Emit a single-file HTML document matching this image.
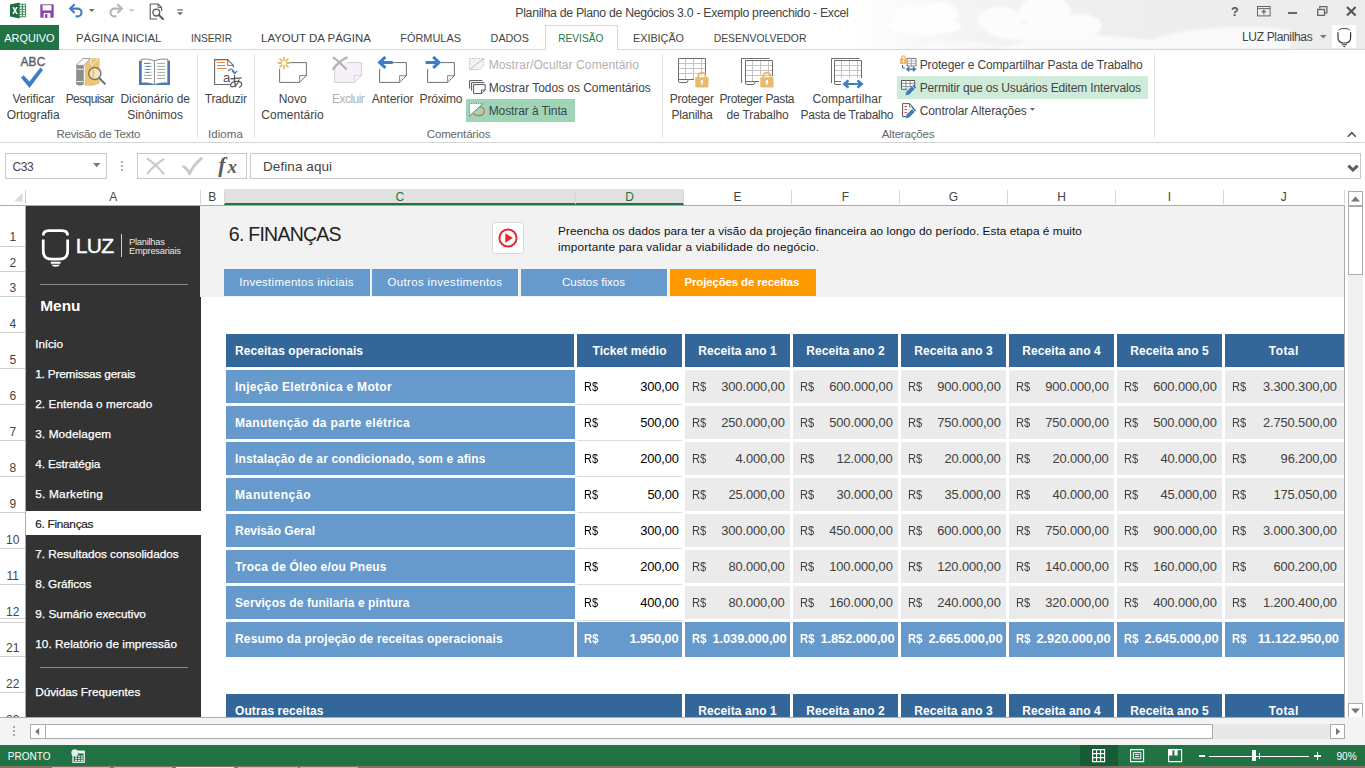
<!DOCTYPE html>
<html><head><meta charset="utf-8"><title>Excel</title>
<style>
*{box-sizing:border-box;margin:0;padding:0}
html,body{width:1365px;height:768px;overflow:hidden;background:#fff}
body{font-family:"Liberation Sans",sans-serif;color:#444}
#root{position:absolute;left:0;top:0;width:1365px;height:768px;overflow:hidden;background:#fff}
.t{position:absolute;white-space:pre;line-height:1;display:block}
.r{position:absolute;display:block}
</style></head><body><div id="root">
<svg class="r" style="left:850.00px;top:0.00px" width="515" height="49" viewBox="0 0 515 49"><defs><linearGradient id="cg" x1="0" x2="1" y1="0" y2="0"><stop offset="0" stop-color="#f1f1f1" stop-opacity="0"/><stop offset="0.22" stop-color="#f1f1f1" stop-opacity="0.8"/><stop offset="0.5" stop-color="#eeeeee" stop-opacity="1"/><stop offset="1" stop-color="#ececec" stop-opacity="1"/></linearGradient>
<filter id="bl"><feGaussianBlur stdDeviation="0.8"/></filter></defs>
<rect width="515" height="49" fill="url(#cg)"/>
<g fill="#fff" opacity="0.8" filter="url(#bl)">
<ellipse cx="60" cy="16" rx="16" ry="11"/><ellipse cx="88" cy="14" rx="20" ry="12"/><ellipse cx="75" cy="26" rx="36" ry="9"/>
<ellipse cx="150" cy="20" rx="22" ry="13"/><ellipse cx="195" cy="12" rx="26" ry="16"/><ellipse cx="230" cy="26" rx="22" ry="12"/><ellipse cx="185" cy="32" rx="48" ry="8"/>
<path d="M150 49 C200 30 250 34 300 40 C340 26 400 24 440 30 L440 49Z" opacity="0.85"/>
<path d="M60 49 C90 38 130 40 160 49Z" opacity="0.6"/>
</g></svg>
<span class="t" style="left:515.30px;top:7.00px;font-size:12.30px;letter-spacing:-0.304px;color:#444;">Planilha de Plano de Negócios 3.0 - Exemplo preenchido - Excel</span>
<div class="r" style="left:0.00px;top:49.00px;width:1365.00px;height:1.00px;background:#d6d6d6;"></div>
<div class="r" style="left:0.00px;top:25.00px;width:59.00px;height:25.00px;background:#217346;"></div>
<span class="t" style="left:4.30px;top:33.00px;font-size:10.90px;letter-spacing:-0.007px;color:#fff;">ARQUIVO</span>
<span class="t" style="left:76.00px;top:33.00px;font-size:11.40px;letter-spacing:-0.005px;color:#444;">PÁGINA INICIAL</span>
<span class="t" style="left:191.00px;top:34.00px;font-size:10.10px;letter-spacing:-0.004px;color:#444;">INSERIR</span>
<span class="t" style="left:261.00px;top:33.00px;font-size:11.50px;letter-spacing:-0.017px;color:#444;">LAYOUT DA PÁGINA</span>
<span class="t" style="left:400.20px;top:33.00px;font-size:10.90px;letter-spacing:0.041px;color:#444;">FÓRMULAS</span>
<span class="t" style="left:490.60px;top:33.00px;font-size:10.80px;letter-spacing:-0.007px;color:#444;">DADOS</span>
<span class="t" style="left:633.00px;top:33.00px;font-size:10.80px;letter-spacing:0.002px;color:#444;">EXIBIÇÃO</span>
<span class="t" style="left:713.70px;top:34.00px;font-size:10.40px;letter-spacing:-0.004px;color:#444;">DESENVOLVEDOR</span>
<div class="r" style="left:545.00px;top:25.00px;width:73.00px;height:25.00px;background:#fff;border:1px solid #d6d6d6;border-bottom:none;"></div>
<span class="t" style="left:558.30px;top:34.00px;font-size:10.10px;letter-spacing:0.019px;color:#217346;">REVISÃO</span>
<span class="t" style="left:1242.00px;top:31.00px;font-size:12.00px;letter-spacing:-0.337px;color:#444;">LUZ Planilhas</span>
<div class="r" style="left:0.00px;top:142.00px;width:1365.00px;height:1.00px;background:#d6d6d6;"></div>
<div class="r" style="left:197.00px;top:54.00px;width:1.00px;height:84.00px;background:#e1e1e1;"></div>
<div class="r" style="left:254.00px;top:54.00px;width:1.00px;height:84.00px;background:#e1e1e1;"></div>
<div class="r" style="left:662.00px;top:54.00px;width:1.00px;height:84.00px;background:#e1e1e1;"></div>
<div class="r" style="left:1154.00px;top:54.00px;width:1.00px;height:84.00px;background:#e1e1e1;"></div>
<span class="t" style="left:12.40px;top:93.00px;font-size:12.00px;letter-spacing:-0.134px;color:#444;">Verificar</span>
<span class="t" style="left:6.70px;top:109.00px;font-size:12.00px;letter-spacing:-0.053px;color:#444;">Ortografia</span>
<span class="t" style="left:65.70px;top:93.00px;font-size:12.00px;letter-spacing:-0.597px;color:#444;">Pesquisar</span>
<span class="t" style="left:120.40px;top:93.00px;font-size:12.00px;letter-spacing:-0.033px;color:#444;">Dicionário de</span>
<span class="t" style="left:127.20px;top:109.00px;font-size:12.00px;letter-spacing:-0.037px;color:#444;">Sinônimos</span>
<span class="t" style="left:204.80px;top:93.00px;font-size:12.00px;letter-spacing:-0.204px;color:#444;">Traduzir</span>
<span class="t" style="left:278.70px;top:93.00px;font-size:12.00px;letter-spacing:0.000px;color:#444;">Novo</span>
<span class="t" style="left:261.30px;top:109.00px;font-size:12.00px;letter-spacing:0.044px;color:#444;">Comentário</span>
<span class="t" style="left:332.00px;top:93.00px;font-size:12.00px;letter-spacing:-0.533px;color:#b1b1b1;">Excluir</span>
<span class="t" style="left:371.70px;top:93.00px;font-size:12.00px;letter-spacing:-0.014px;color:#444;">Anterior</span>
<span class="t" style="left:419.60px;top:93.00px;font-size:12.00px;letter-spacing:-0.200px;color:#444;">Próximo</span>
<span class="t" style="left:488.70px;top:59.00px;font-size:12.00px;letter-spacing:0.088px;color:#b1b1b1;">Mostrar/Ocultar Comentário</span>
<span class="t" style="left:488.70px;top:82.00px;font-size:12.00px;letter-spacing:-0.038px;color:#444;">Mostrar Todos os Comentários</span>
<div class="r" style="left:466.00px;top:99.00px;width:109.00px;height:23.00px;background:#9fd5b7;"></div>
<span class="t" style="left:488.70px;top:105.00px;font-size:12.00px;letter-spacing:-0.102px;color:#444;">Mostrar à Tinta</span>
<span class="t" style="left:669.70px;top:93.00px;font-size:12.00px;letter-spacing:-0.243px;color:#444;">Proteger</span>
<span class="t" style="left:671.50px;top:109.00px;font-size:12.00px;letter-spacing:-0.221px;color:#444;">Planilha</span>
<span class="t" style="left:719.50px;top:93.00px;font-size:12.00px;letter-spacing:-0.387px;color:#444;">Proteger Pasta</span>
<span class="t" style="left:726.40px;top:109.00px;font-size:12.00px;letter-spacing:-0.107px;color:#444;">de Trabalho</span>
<span class="t" style="left:812.50px;top:93.00px;font-size:12.00px;letter-spacing:0.068px;color:#444;">Compartilhar</span>
<span class="t" style="left:800.60px;top:109.00px;font-size:12.00px;letter-spacing:-0.280px;color:#444;">Pasta de Trabalho</span>
<span class="t" style="left:919.70px;top:59.00px;font-size:12.00px;letter-spacing:-0.144px;color:#444;">Proteger e Compartilhar Pasta de Trabalho</span>
<div class="r" style="left:897.00px;top:76.00px;width:251.00px;height:23.00px;background:#cfecdb;"></div>
<span class="t" style="left:919.70px;top:82.00px;font-size:12.00px;letter-spacing:-0.148px;color:#444;">Permitir que os Usuários Editem Intervalos</span>
<span class="t" style="left:919.70px;top:105.00px;font-size:12.00px;letter-spacing:-0.087px;color:#444;">Controlar Alterações</span>
<span class="t" style="left:56.60px;top:129.00px;font-size:11.50px;letter-spacing:-0.280px;color:#666;">Revisão de Texto</span>
<span class="t" style="left:208.00px;top:129.00px;font-size:11.50px;letter-spacing:0.075px;color:#666;">Idioma</span>
<span class="t" style="left:426.80px;top:129.00px;font-size:11.50px;letter-spacing:-0.155px;color:#666;">Comentários</span>
<span class="t" style="left:881.80px;top:129.00px;font-size:11.50px;letter-spacing:-0.186px;color:#666;">Alterações</span>
<div class="r" style="left:5.00px;top:153.00px;width:102.00px;height:26.00px;background:#fff;border:1px solid #c8c8c8;"></div>
<span class="t" style="left:12.50px;top:161.00px;font-size:12.00px;letter-spacing:-0.400px;color:#444;">C33</span>
<div class="r" style="left:137.00px;top:153.00px;width:110.00px;height:26.00px;background:#fff;border:1px solid #c8c8c8;"></div>
<div class="r" style="left:250.00px;top:153.00px;width:1111.00px;height:26.00px;background:#fff;border:1px solid #c8c8c8;"></div>
<span class="t" style="left:263.00px;top:160.00px;font-size:13.50px;letter-spacing:0.075px;color:#444;">Defina aqui</span>
<div class="r" style="left:0.00px;top:188.00px;width:1345.00px;height:17.00px;background:#fff;"></div>
<div class="r" style="left:224.00px;top:189.00px;width:459.50px;height:15.00px;background:#e1e1e1;"></div>
<div class="r" style="left:224.00px;top:203.00px;width:459.50px;height:2.00px;background:#217346;"></div>
<div class="r" style="left:200.00px;top:190.00px;width:1.00px;height:14.00px;background:#d6d6d6;"></div>
<span class="t" style="left:109.25px;top:191.00px;font-size:12.00px;letter-spacing:0.000px;color:#444;">A</span>
<div class="r" style="left:223.50px;top:190.00px;width:1.00px;height:14.00px;background:#d6d6d6;"></div>
<span class="t" style="left:208.25px;top:191.00px;font-size:12.00px;letter-spacing:0.000px;color:#444;">B</span>
<div class="r" style="left:575.00px;top:190.00px;width:1.00px;height:14.00px;background:#d6d6d6;"></div>
<span class="t" style="left:395.44px;top:191.00px;font-size:12.00px;letter-spacing:0.000px;color:#217346;">C</span>
<div class="r" style="left:683.00px;top:190.00px;width:1.00px;height:14.00px;background:#d6d6d6;"></div>
<span class="t" style="left:625.19px;top:191.00px;font-size:12.00px;letter-spacing:0.000px;color:#217346;">D</span>
<div class="r" style="left:791.00px;top:190.00px;width:1.00px;height:14.00px;background:#d6d6d6;"></div>
<span class="t" style="left:733.50px;top:191.00px;font-size:12.00px;letter-spacing:0.000px;color:#444;">E</span>
<div class="r" style="left:899.00px;top:190.00px;width:1.00px;height:14.00px;background:#d6d6d6;"></div>
<span class="t" style="left:841.81px;top:191.00px;font-size:12.00px;letter-spacing:0.000px;color:#444;">F</span>
<div class="r" style="left:1007.00px;top:190.00px;width:1.00px;height:14.00px;background:#d6d6d6;"></div>
<span class="t" style="left:948.81px;top:191.00px;font-size:12.00px;letter-spacing:0.000px;color:#444;">G</span>
<div class="r" style="left:1115.00px;top:190.00px;width:1.00px;height:14.00px;background:#d6d6d6;"></div>
<span class="t" style="left:1057.19px;top:191.00px;font-size:12.00px;letter-spacing:0.000px;color:#444;">H</span>
<div class="r" style="left:1223.00px;top:190.00px;width:1.00px;height:14.00px;background:#d6d6d6;"></div>
<span class="t" style="left:1167.81px;top:191.00px;font-size:12.00px;letter-spacing:0.000px;color:#444;">I</span>
<div class="r" style="left:1343.50px;top:190.00px;width:1.00px;height:14.00px;background:#d6d6d6;"></div>
<span class="t" style="left:1280.75px;top:191.00px;font-size:12.00px;letter-spacing:0.000px;color:#444;">J</span>
<div class="r" style="left:25.00px;top:190.00px;width:1.00px;height:14.00px;background:#d0d0d0;"></div>
<div class="r" style="left:0.00px;top:204.50px;width:1345.00px;height:1.00px;background:#ababab;"></div>
<svg class="r" style="left:13.50px;top:193.00px" width="9" height="9" viewBox="0 0 9 9"><path d="M8.6 0 V8.6 H0 Z" fill="#dcdcdc"/></svg>
<div class="r" style="left:0.00px;top:246.00px;width:25.00px;height:1.00px;background:#d0d0d0;"></div>
<span class="t" style="left:9.49px;top:231.00px;font-size:12.00px;letter-spacing:0.000px;color:#444;">1</span>
<div class="r" style="left:0.00px;top:271.00px;width:25.00px;height:1.00px;background:#d0d0d0;"></div>
<span class="t" style="left:9.49px;top:257.00px;font-size:12.00px;letter-spacing:0.000px;color:#444;">2</span>
<div class="r" style="left:0.00px;top:296.00px;width:25.00px;height:1.00px;background:#d0d0d0;"></div>
<span class="t" style="left:9.49px;top:282.00px;font-size:12.00px;letter-spacing:0.000px;color:#444;">3</span>
<div class="r" style="left:0.00px;top:332.00px;width:25.00px;height:1.00px;background:#d0d0d0;"></div>
<span class="t" style="left:9.49px;top:318.00px;font-size:12.00px;letter-spacing:0.000px;color:#444;">4</span>
<div class="r" style="left:0.00px;top:368.00px;width:25.00px;height:1.00px;background:#d0d0d0;"></div>
<span class="t" style="left:9.49px;top:354.00px;font-size:12.00px;letter-spacing:0.000px;color:#444;">5</span>
<div class="r" style="left:0.00px;top:404.00px;width:25.00px;height:1.00px;background:#d0d0d0;"></div>
<span class="t" style="left:9.49px;top:390.00px;font-size:12.00px;letter-spacing:0.000px;color:#444;">6</span>
<div class="r" style="left:0.00px;top:440.00px;width:25.00px;height:1.00px;background:#d0d0d0;"></div>
<span class="t" style="left:9.49px;top:426.00px;font-size:12.00px;letter-spacing:0.000px;color:#444;">7</span>
<div class="r" style="left:0.00px;top:476.00px;width:25.00px;height:1.00px;background:#d0d0d0;"></div>
<span class="t" style="left:9.49px;top:462.00px;font-size:12.00px;letter-spacing:0.000px;color:#444;">8</span>
<div class="r" style="left:0.00px;top:512.00px;width:25.00px;height:1.00px;background:#d0d0d0;"></div>
<span class="t" style="left:9.49px;top:498.00px;font-size:12.00px;letter-spacing:0.000px;color:#444;">9</span>
<div class="r" style="left:0.00px;top:548.00px;width:25.00px;height:1.00px;background:#d0d0d0;"></div>
<span class="t" style="left:6.11px;top:534.00px;font-size:12.00px;letter-spacing:0.000px;color:#444;">10</span>
<div class="r" style="left:0.00px;top:584.00px;width:25.00px;height:1.00px;background:#d0d0d0;"></div>
<span class="t" style="left:6.55px;top:570.00px;font-size:12.00px;letter-spacing:0.000px;color:#444;">11</span>
<span class="t" style="left:6.11px;top:606.00px;font-size:12.00px;letter-spacing:0.000px;color:#444;">12</span>
<div class="r" style="left:0.00px;top:656.00px;width:25.00px;height:1.00px;background:#d0d0d0;"></div>
<span class="t" style="left:6.11px;top:642.00px;font-size:12.00px;letter-spacing:0.000px;color:#444;">21</span>
<div class="r" style="left:0.00px;top:692.00px;width:25.00px;height:1.00px;background:#d0d0d0;"></div>
<span class="t" style="left:6.11px;top:678.00px;font-size:12.00px;letter-spacing:0.000px;color:#444;">22</span>
<div class="r" style="left:0.00px;top:728.00px;width:25.00px;height:1.00px;background:#d0d0d0;"></div>
<span class="t" style="left:6.11px;top:714.00px;font-size:12.00px;letter-spacing:0.000px;color:#444;">23</span>
<div class="r" style="left:0.00px;top:618.00px;width:25.00px;height:1.00px;background:#d0d0d0;"></div>
<div class="r" style="left:0.00px;top:622.00px;width:25.00px;height:1.00px;background:#d0d0d0;"></div>
<div class="r" style="left:25.00px;top:205.00px;width:1.00px;height:512.00px;background:#ababab;"></div>
<div class="r" style="left:26.00px;top:205.50px;width:174.50px;height:511.50px;background:#333333;"></div>
<div class="r" style="left:200.00px;top:205.50px;width:1144.00px;height:91.50px;background:#f2f2f2;"></div>
<div class="r" style="left:1344.00px;top:205.00px;width:1.00px;height:512.00px;background:#ababab;"></div>
<span class="t" style="left:75.80px;top:235.00px;font-size:21.00px;letter-spacing:-0.712px;color:#fff;-webkit-text-stroke:0.4px #fff;">LUZ</span>
<div class="r" style="left:121.00px;top:234.00px;width:1.00px;height:23.00px;background:#cfcfcf;"></div>
<span class="t" style="left:129.00px;top:238.00px;font-size:9.30px;letter-spacing:-0.238px;color:#e6e6e6;">Planilhas</span>
<span class="t" style="left:129.00px;top:247.00px;font-size:9.30px;letter-spacing:-0.208px;color:#e6e6e6;">Empresariais</span>
<svg class="r" style="left:40.00px;top:227.00px" width="32" height="42" viewBox="0 0 32 42"><g fill="none" stroke="#fff" stroke-width="2.7">
<path d="M3.25 8.6 Q3.25 3.55 9 3.55 H21.9 Q27.65 3.55 27.65 8.6"/>
<path d="M3.25 12.6 V24 Q3.25 32.2 12 32.2 H18.9 Q27.65 32.2 27.65 24 V12.6"/>
</g><path d="M10.8 34.7 H20.6 V36.7 H10.8Z M11.4 37.8 H20 Q19 39.8 15.7 39.8 Q12.4 39.8 11.4 37.8Z" fill="#fff"/></svg>
<div class="r" style="left:39.50px;top:284.00px;width:148.00px;height:1.00px;background:#8d8989;"></div>
<span class="t" style="left:40.30px;top:298.00px;font-size:15.40px;letter-spacing:0.003px;color:#fff;font-weight:bold;">Menu</span>
<span class="t" style="left:35.20px;top:339.00px;font-size:11.80px;letter-spacing:-0.089px;color:#fff;-webkit-text-stroke:0.25px #fff;">Início</span>
<span class="t" style="left:35.20px;top:369.00px;font-size:11.80px;letter-spacing:-0.181px;color:#fff;-webkit-text-stroke:0.25px #fff;">1. Premissas gerais</span>
<span class="t" style="left:35.20px;top:399.00px;font-size:11.80px;letter-spacing:0.052px;color:#fff;-webkit-text-stroke:0.25px #fff;">2. Entenda o mercado</span>
<span class="t" style="left:35.20px;top:429.00px;font-size:11.80px;letter-spacing:0.108px;color:#fff;-webkit-text-stroke:0.25px #fff;">3. Modelagem</span>
<span class="t" style="left:35.20px;top:459.00px;font-size:11.80px;letter-spacing:-0.090px;color:#fff;-webkit-text-stroke:0.25px #fff;">4. Estratégia</span>
<span class="t" style="left:35.20px;top:489.00px;font-size:11.80px;letter-spacing:0.245px;color:#fff;-webkit-text-stroke:0.25px #fff;">5. Marketing</span>
<span class="t" style="left:35.20px;top:549.00px;font-size:11.80px;letter-spacing:-0.034px;color:#fff;-webkit-text-stroke:0.25px #fff;">7. Resultados consolidados</span>
<span class="t" style="left:35.20px;top:579.00px;font-size:11.80px;letter-spacing:-0.079px;color:#fff;-webkit-text-stroke:0.25px #fff;">8. Gráficos</span>
<span class="t" style="left:35.20px;top:609.00px;font-size:11.80px;letter-spacing:0.031px;color:#fff;-webkit-text-stroke:0.25px #fff;">9. Sumário executivo</span>
<span class="t" style="left:35.20px;top:639.00px;font-size:11.80px;letter-spacing:0.033px;color:#fff;-webkit-text-stroke:0.25px #fff;">10. Relatório de impressão</span>
<span class="t" style="left:35.20px;top:687.00px;font-size:11.80px;letter-spacing:-0.028px;color:#fff;-webkit-text-stroke:0.25px #fff;">Dúvidas Frequentes</span>
<div class="r" style="left:26.00px;top:511.00px;width:174.50px;height:24.00px;background:#fff;"></div>
<span class="t" style="left:35.20px;top:519.00px;font-size:11.80px;letter-spacing:-0.271px;color:#222;-webkit-text-stroke:0.2px #222;">6. Finanças</span>
<div class="r" style="left:39.50px;top:667.00px;width:148.00px;height:1.00px;background:#8d8989;"></div>
<span class="t" style="left:228.80px;top:225.00px;font-size:19.50px;letter-spacing:-0.745px;color:#222;">6. FINANÇAS</span>
<span class="t" style="left:558.00px;top:226.00px;font-size:11.80px;letter-spacing:0.053px;color:#111;">Preencha os dados para ter a visão da projeção financeira ao longo do período. Esta etapa é muito</span>
<span class="t" style="left:558.00px;top:242.00px;font-size:11.80px;letter-spacing:0.149px;color:#111;">importante para validar a viabilidade do negócio.</span>
<div class="r" style="left:492.00px;top:222.00px;width:32.00px;height:31.50px;background:#fff;border:1px solid #d9d9d9;border-radius:3px;"></div>
<svg class="r" style="left:497.00px;top:227.00px" width="22" height="22" viewBox="0 0 22 22"><circle cx="11" cy="11" r="8.6" fill="none" stroke="#e8262b" stroke-width="2"/><path d="M8.3 6.2 L16 11 L8.3 15.8Z" fill="#e8262b"/></svg>
<div class="r" style="left:224.00px;top:269.00px;width:146.00px;height:27.00px;background:#6699cc;"></div>
<div class="r" style="left:372.00px;top:269.00px;width:146.00px;height:27.00px;background:#6699cc;"></div>
<div class="r" style="left:521.00px;top:269.00px;width:146.00px;height:27.00px;background:#6699cc;"></div>
<div class="r" style="left:670.00px;top:269.00px;width:146.00px;height:27.00px;background:#ff9900;"></div>
<span class="t" style="left:239.30px;top:277.00px;font-size:11.50px;letter-spacing:0.265px;color:#fff;">Investimentos iniciais</span>
<span class="t" style="left:387.50px;top:277.00px;font-size:11.50px;letter-spacing:0.342px;color:#fff;">Outros investimentos</span>
<span class="t" style="left:562.00px;top:277.00px;font-size:11.50px;letter-spacing:0.034px;color:#fff;">Custos fixos</span>
<span class="t" style="left:684.50px;top:277.00px;font-size:11.50px;letter-spacing:-0.163px;color:#fff;font-weight:bold;">Projeções de receitas</span>
<div class="r" style="left:226.00px;top:334.00px;width:348.00px;height:32.50px;background:#336699;"></div>
<div class="r" style="left:577.00px;top:334.00px;width:105.00px;height:32.50px;background:#336699;"></div>
<div class="r" style="left:685.00px;top:334.00px;width:105.00px;height:32.50px;background:#336699;"></div>
<div class="r" style="left:793.00px;top:334.00px;width:105.00px;height:32.50px;background:#336699;"></div>
<div class="r" style="left:901.00px;top:334.00px;width:105.00px;height:32.50px;background:#336699;"></div>
<div class="r" style="left:1009.00px;top:334.00px;width:105.00px;height:32.50px;background:#336699;"></div>
<div class="r" style="left:1117.00px;top:334.00px;width:105.00px;height:32.50px;background:#336699;"></div>
<div class="r" style="left:1225.30px;top:334.00px;width:118.70px;height:32.50px;background:#336699;"></div>
<span class="t" style="left:235.00px;top:345.00px;font-size:12.00px;letter-spacing:0.062px;color:#fff;font-weight:bold;">Receitas operacionais</span>
<span class="t" style="left:592.50px;top:345.00px;font-size:12.00px;letter-spacing:0.080px;color:#fff;font-weight:bold;">Ticket médio</span>
<span class="t" style="left:698.25px;top:345.00px;font-size:12.00px;letter-spacing:0.094px;color:#fff;font-weight:bold;">Receita ano 1</span>
<span class="t" style="left:806.25px;top:345.00px;font-size:12.00px;letter-spacing:0.094px;color:#fff;font-weight:bold;">Receita ano 2</span>
<span class="t" style="left:914.25px;top:345.00px;font-size:12.00px;letter-spacing:0.094px;color:#fff;font-weight:bold;">Receita ano 3</span>
<span class="t" style="left:1022.25px;top:345.00px;font-size:12.00px;letter-spacing:0.094px;color:#fff;font-weight:bold;">Receita ano 4</span>
<span class="t" style="left:1130.25px;top:345.00px;font-size:12.00px;letter-spacing:0.094px;color:#fff;font-weight:bold;">Receita ano 5</span>
<span class="t" style="left:1268.75px;top:345.00px;font-size:12.00px;letter-spacing:0.438px;color:#fff;font-weight:bold;">Total</span>
<div class="r" style="left:226.00px;top:370.00px;width:349.00px;height:32.70px;background:#6699cc;"></div>
<span class="t" style="left:235.00px;top:381.00px;font-size:12.00px;letter-spacing:0.289px;color:#fff;font-weight:bold;">Injeção Eletrônica e Motor</span>
<div class="r" style="left:577.00px;top:403.50px;width:105.00px;height:1.00px;background:#dcdcdc;"></div>
<span class="t" style="left:584.00px;top:381.00px;font-size:12.50px;letter-spacing:0.000px;color:#000;transform:scaleX(0.8750);transform-origin:0 0;">R$</span>
<span class="t" style="left:640.20px;top:381.00px;font-size:12.90px;letter-spacing:-0.150px;color:#000;">300,00</span>
<div class="r" style="left:685.00px;top:369.50px;width:105.00px;height:33.50px;background:#ebebeb;"></div>
<span class="t" style="left:691.70px;top:381.00px;font-size:12.50px;letter-spacing:0.000px;color:#404040;transform:scaleX(0.8937);transform-origin:0 0;">R$</span>
<span class="t" style="left:721.20px;top:381.00px;font-size:12.90px;letter-spacing:-0.100px;color:#404040;">300.000,00</span>
<div class="r" style="left:793.00px;top:369.50px;width:105.00px;height:33.50px;background:#ebebeb;"></div>
<span class="t" style="left:799.70px;top:381.00px;font-size:12.50px;letter-spacing:0.000px;color:#404040;transform:scaleX(0.8937);transform-origin:0 0;">R$</span>
<span class="t" style="left:829.20px;top:381.00px;font-size:12.90px;letter-spacing:-0.100px;color:#404040;">600.000,00</span>
<div class="r" style="left:901.00px;top:369.50px;width:105.00px;height:33.50px;background:#ebebeb;"></div>
<span class="t" style="left:907.70px;top:381.00px;font-size:12.50px;letter-spacing:0.000px;color:#404040;transform:scaleX(0.8937);transform-origin:0 0;">R$</span>
<span class="t" style="left:937.20px;top:381.00px;font-size:12.90px;letter-spacing:-0.100px;color:#404040;">900.000,00</span>
<div class="r" style="left:1009.00px;top:369.50px;width:105.00px;height:33.50px;background:#ebebeb;"></div>
<span class="t" style="left:1015.70px;top:381.00px;font-size:12.50px;letter-spacing:0.000px;color:#404040;transform:scaleX(0.8937);transform-origin:0 0;">R$</span>
<span class="t" style="left:1045.20px;top:381.00px;font-size:12.90px;letter-spacing:-0.100px;color:#404040;">900.000,00</span>
<div class="r" style="left:1117.00px;top:369.50px;width:105.00px;height:33.50px;background:#ebebeb;"></div>
<span class="t" style="left:1123.70px;top:381.00px;font-size:12.50px;letter-spacing:0.000px;color:#404040;transform:scaleX(0.8937);transform-origin:0 0;">R$</span>
<span class="t" style="left:1153.20px;top:381.00px;font-size:12.90px;letter-spacing:-0.100px;color:#404040;">600.000,00</span>
<div class="r" style="left:1225.30px;top:369.50px;width:118.70px;height:33.50px;background:#ebebeb;"></div>
<span class="t" style="left:1232.00px;top:381.00px;font-size:12.50px;letter-spacing:0.000px;color:#404040;transform:scaleX(0.8937);transform-origin:0 0;">R$</span>
<span class="t" style="left:1262.90px;top:381.00px;font-size:12.90px;letter-spacing:-0.106px;color:#404040;">3.300.300,00</span>
<div class="r" style="left:226.00px;top:406.00px;width:349.00px;height:32.70px;background:#6699cc;"></div>
<span class="t" style="left:235.00px;top:417.00px;font-size:12.00px;letter-spacing:0.348px;color:#fff;font-weight:bold;">Manutenção da parte elétrica</span>
<div class="r" style="left:577.00px;top:439.50px;width:105.00px;height:1.00px;background:#dcdcdc;"></div>
<span class="t" style="left:584.00px;top:417.00px;font-size:12.50px;letter-spacing:0.000px;color:#000;transform:scaleX(0.8750);transform-origin:0 0;">R$</span>
<span class="t" style="left:640.20px;top:417.00px;font-size:12.90px;letter-spacing:-0.150px;color:#000;">500,00</span>
<div class="r" style="left:685.00px;top:405.50px;width:105.00px;height:33.50px;background:#ebebeb;"></div>
<span class="t" style="left:691.70px;top:417.00px;font-size:12.50px;letter-spacing:0.000px;color:#404040;transform:scaleX(0.8937);transform-origin:0 0;">R$</span>
<span class="t" style="left:721.20px;top:417.00px;font-size:12.90px;letter-spacing:-0.100px;color:#404040;">250.000,00</span>
<div class="r" style="left:793.00px;top:405.50px;width:105.00px;height:33.50px;background:#ebebeb;"></div>
<span class="t" style="left:799.70px;top:417.00px;font-size:12.50px;letter-spacing:0.000px;color:#404040;transform:scaleX(0.8937);transform-origin:0 0;">R$</span>
<span class="t" style="left:829.20px;top:417.00px;font-size:12.90px;letter-spacing:-0.100px;color:#404040;">500.000,00</span>
<div class="r" style="left:901.00px;top:405.50px;width:105.00px;height:33.50px;background:#ebebeb;"></div>
<span class="t" style="left:907.70px;top:417.00px;font-size:12.50px;letter-spacing:0.000px;color:#404040;transform:scaleX(0.8937);transform-origin:0 0;">R$</span>
<span class="t" style="left:937.20px;top:417.00px;font-size:12.90px;letter-spacing:-0.100px;color:#404040;">750.000,00</span>
<div class="r" style="left:1009.00px;top:405.50px;width:105.00px;height:33.50px;background:#ebebeb;"></div>
<span class="t" style="left:1015.70px;top:417.00px;font-size:12.50px;letter-spacing:0.000px;color:#404040;transform:scaleX(0.8937);transform-origin:0 0;">R$</span>
<span class="t" style="left:1045.20px;top:417.00px;font-size:12.90px;letter-spacing:-0.100px;color:#404040;">750.000,00</span>
<div class="r" style="left:1117.00px;top:405.50px;width:105.00px;height:33.50px;background:#ebebeb;"></div>
<span class="t" style="left:1123.70px;top:417.00px;font-size:12.50px;letter-spacing:0.000px;color:#404040;transform:scaleX(0.8937);transform-origin:0 0;">R$</span>
<span class="t" style="left:1153.20px;top:417.00px;font-size:12.90px;letter-spacing:-0.100px;color:#404040;">500.000,00</span>
<div class="r" style="left:1225.30px;top:405.50px;width:118.70px;height:33.50px;background:#ebebeb;"></div>
<span class="t" style="left:1232.00px;top:417.00px;font-size:12.50px;letter-spacing:0.000px;color:#404040;transform:scaleX(0.8937);transform-origin:0 0;">R$</span>
<span class="t" style="left:1262.90px;top:417.00px;font-size:12.90px;letter-spacing:-0.106px;color:#404040;">2.750.500,00</span>
<div class="r" style="left:226.00px;top:442.00px;width:349.00px;height:32.70px;background:#6699cc;"></div>
<span class="t" style="left:235.00px;top:453.00px;font-size:12.00px;letter-spacing:0.140px;color:#fff;font-weight:bold;">Instalação de ar condicionado, som e afins</span>
<div class="r" style="left:577.00px;top:475.50px;width:105.00px;height:1.00px;background:#dcdcdc;"></div>
<span class="t" style="left:584.00px;top:453.00px;font-size:12.50px;letter-spacing:0.000px;color:#000;transform:scaleX(0.8750);transform-origin:0 0;">R$</span>
<span class="t" style="left:640.20px;top:453.00px;font-size:12.90px;letter-spacing:-0.150px;color:#000;">200,00</span>
<div class="r" style="left:685.00px;top:441.50px;width:105.00px;height:33.50px;background:#ebebeb;"></div>
<span class="t" style="left:691.70px;top:453.00px;font-size:12.50px;letter-spacing:0.000px;color:#404040;transform:scaleX(0.8937);transform-origin:0 0;">R$</span>
<span class="t" style="left:735.60px;top:453.00px;font-size:12.90px;letter-spacing:-0.146px;color:#404040;">4.000,00</span>
<div class="r" style="left:793.00px;top:441.50px;width:105.00px;height:33.50px;background:#ebebeb;"></div>
<span class="t" style="left:799.70px;top:453.00px;font-size:12.50px;letter-spacing:0.000px;color:#404040;transform:scaleX(0.8937);transform-origin:0 0;">R$</span>
<span class="t" style="left:836.40px;top:453.00px;font-size:12.90px;letter-spacing:-0.120px;color:#404040;">12.000,00</span>
<div class="r" style="left:901.00px;top:441.50px;width:105.00px;height:33.50px;background:#ebebeb;"></div>
<span class="t" style="left:907.70px;top:453.00px;font-size:12.50px;letter-spacing:0.000px;color:#404040;transform:scaleX(0.8937);transform-origin:0 0;">R$</span>
<span class="t" style="left:944.40px;top:453.00px;font-size:12.90px;letter-spacing:-0.120px;color:#404040;">20.000,00</span>
<div class="r" style="left:1009.00px;top:441.50px;width:105.00px;height:33.50px;background:#ebebeb;"></div>
<span class="t" style="left:1015.70px;top:453.00px;font-size:12.50px;letter-spacing:0.000px;color:#404040;transform:scaleX(0.8937);transform-origin:0 0;">R$</span>
<span class="t" style="left:1052.40px;top:453.00px;font-size:12.90px;letter-spacing:-0.120px;color:#404040;">20.000,00</span>
<div class="r" style="left:1117.00px;top:441.50px;width:105.00px;height:33.50px;background:#ebebeb;"></div>
<span class="t" style="left:1123.70px;top:453.00px;font-size:12.50px;letter-spacing:0.000px;color:#404040;transform:scaleX(0.8937);transform-origin:0 0;">R$</span>
<span class="t" style="left:1160.40px;top:453.00px;font-size:12.90px;letter-spacing:-0.120px;color:#404040;">40.000,00</span>
<div class="r" style="left:1225.30px;top:441.50px;width:118.70px;height:33.50px;background:#ebebeb;"></div>
<span class="t" style="left:1232.00px;top:453.00px;font-size:12.50px;letter-spacing:0.000px;color:#404040;transform:scaleX(0.8937);transform-origin:0 0;">R$</span>
<span class="t" style="left:1280.60px;top:453.00px;font-size:12.90px;letter-spacing:-0.120px;color:#404040;">96.200,00</span>
<div class="r" style="left:226.00px;top:478.00px;width:349.00px;height:32.70px;background:#6699cc;"></div>
<span class="t" style="left:235.00px;top:489.00px;font-size:12.00px;letter-spacing:0.611px;color:#fff;font-weight:bold;">Manutenção</span>
<div class="r" style="left:577.00px;top:511.50px;width:105.00px;height:1.00px;background:#dcdcdc;"></div>
<span class="t" style="left:584.00px;top:489.00px;font-size:12.50px;letter-spacing:0.000px;color:#000;transform:scaleX(0.8750);transform-origin:0 0;">R$</span>
<span class="t" style="left:647.40px;top:489.00px;font-size:12.90px;letter-spacing:-0.203px;color:#000;">50,00</span>
<div class="r" style="left:685.00px;top:477.50px;width:105.00px;height:33.50px;background:#ebebeb;"></div>
<span class="t" style="left:691.70px;top:489.00px;font-size:12.50px;letter-spacing:0.000px;color:#404040;transform:scaleX(0.8937);transform-origin:0 0;">R$</span>
<span class="t" style="left:728.40px;top:489.00px;font-size:12.90px;letter-spacing:-0.120px;color:#404040;">25.000,00</span>
<div class="r" style="left:793.00px;top:477.50px;width:105.00px;height:33.50px;background:#ebebeb;"></div>
<span class="t" style="left:799.70px;top:489.00px;font-size:12.50px;letter-spacing:0.000px;color:#404040;transform:scaleX(0.8937);transform-origin:0 0;">R$</span>
<span class="t" style="left:836.40px;top:489.00px;font-size:12.90px;letter-spacing:-0.120px;color:#404040;">30.000,00</span>
<div class="r" style="left:901.00px;top:477.50px;width:105.00px;height:33.50px;background:#ebebeb;"></div>
<span class="t" style="left:907.70px;top:489.00px;font-size:12.50px;letter-spacing:0.000px;color:#404040;transform:scaleX(0.8937);transform-origin:0 0;">R$</span>
<span class="t" style="left:944.40px;top:489.00px;font-size:12.90px;letter-spacing:-0.120px;color:#404040;">35.000,00</span>
<div class="r" style="left:1009.00px;top:477.50px;width:105.00px;height:33.50px;background:#ebebeb;"></div>
<span class="t" style="left:1015.70px;top:489.00px;font-size:12.50px;letter-spacing:0.000px;color:#404040;transform:scaleX(0.8937);transform-origin:0 0;">R$</span>
<span class="t" style="left:1052.40px;top:489.00px;font-size:12.90px;letter-spacing:-0.120px;color:#404040;">40.000,00</span>
<div class="r" style="left:1117.00px;top:477.50px;width:105.00px;height:33.50px;background:#ebebeb;"></div>
<span class="t" style="left:1123.70px;top:489.00px;font-size:12.50px;letter-spacing:0.000px;color:#404040;transform:scaleX(0.8937);transform-origin:0 0;">R$</span>
<span class="t" style="left:1160.40px;top:489.00px;font-size:12.90px;letter-spacing:-0.120px;color:#404040;">45.000,00</span>
<div class="r" style="left:1225.30px;top:477.50px;width:118.70px;height:33.50px;background:#ebebeb;"></div>
<span class="t" style="left:1232.00px;top:489.00px;font-size:12.50px;letter-spacing:0.000px;color:#404040;transform:scaleX(0.8937);transform-origin:0 0;">R$</span>
<span class="t" style="left:1273.40px;top:489.00px;font-size:12.90px;letter-spacing:-0.100px;color:#404040;">175.050,00</span>
<div class="r" style="left:226.00px;top:514.00px;width:349.00px;height:32.70px;background:#6699cc;"></div>
<span class="t" style="left:235.00px;top:525.00px;font-size:12.00px;letter-spacing:0.000px;color:#fff;font-weight:bold;">Revisão Geral</span>
<div class="r" style="left:577.00px;top:547.50px;width:105.00px;height:1.00px;background:#dcdcdc;"></div>
<span class="t" style="left:584.00px;top:525.00px;font-size:12.50px;letter-spacing:0.000px;color:#000;transform:scaleX(0.8750);transform-origin:0 0;">R$</span>
<span class="t" style="left:640.20px;top:525.00px;font-size:12.90px;letter-spacing:-0.150px;color:#000;">300,00</span>
<div class="r" style="left:685.00px;top:513.50px;width:105.00px;height:33.50px;background:#ebebeb;"></div>
<span class="t" style="left:691.70px;top:525.00px;font-size:12.50px;letter-spacing:0.000px;color:#404040;transform:scaleX(0.8937);transform-origin:0 0;">R$</span>
<span class="t" style="left:721.20px;top:525.00px;font-size:12.90px;letter-spacing:-0.100px;color:#404040;">300.000,00</span>
<div class="r" style="left:793.00px;top:513.50px;width:105.00px;height:33.50px;background:#ebebeb;"></div>
<span class="t" style="left:799.70px;top:525.00px;font-size:12.50px;letter-spacing:0.000px;color:#404040;transform:scaleX(0.8937);transform-origin:0 0;">R$</span>
<span class="t" style="left:829.20px;top:525.00px;font-size:12.90px;letter-spacing:-0.100px;color:#404040;">450.000,00</span>
<div class="r" style="left:901.00px;top:513.50px;width:105.00px;height:33.50px;background:#ebebeb;"></div>
<span class="t" style="left:907.70px;top:525.00px;font-size:12.50px;letter-spacing:0.000px;color:#404040;transform:scaleX(0.8937);transform-origin:0 0;">R$</span>
<span class="t" style="left:937.20px;top:525.00px;font-size:12.90px;letter-spacing:-0.100px;color:#404040;">600.000,00</span>
<div class="r" style="left:1009.00px;top:513.50px;width:105.00px;height:33.50px;background:#ebebeb;"></div>
<span class="t" style="left:1015.70px;top:525.00px;font-size:12.50px;letter-spacing:0.000px;color:#404040;transform:scaleX(0.8937);transform-origin:0 0;">R$</span>
<span class="t" style="left:1045.20px;top:525.00px;font-size:12.90px;letter-spacing:-0.100px;color:#404040;">750.000,00</span>
<div class="r" style="left:1117.00px;top:513.50px;width:105.00px;height:33.50px;background:#ebebeb;"></div>
<span class="t" style="left:1123.70px;top:525.00px;font-size:12.50px;letter-spacing:0.000px;color:#404040;transform:scaleX(0.8937);transform-origin:0 0;">R$</span>
<span class="t" style="left:1153.20px;top:525.00px;font-size:12.90px;letter-spacing:-0.100px;color:#404040;">900.000,00</span>
<div class="r" style="left:1225.30px;top:513.50px;width:118.70px;height:33.50px;background:#ebebeb;"></div>
<span class="t" style="left:1232.00px;top:525.00px;font-size:12.50px;letter-spacing:0.000px;color:#404040;transform:scaleX(0.8937);transform-origin:0 0;">R$</span>
<span class="t" style="left:1262.90px;top:525.00px;font-size:12.90px;letter-spacing:-0.106px;color:#404040;">3.000.300,00</span>
<div class="r" style="left:226.00px;top:550.00px;width:349.00px;height:32.70px;background:#6699cc;"></div>
<span class="t" style="left:235.00px;top:561.00px;font-size:12.00px;letter-spacing:0.207px;color:#fff;font-weight:bold;">Troca de Óleo e/ou Pneus</span>
<div class="r" style="left:577.00px;top:583.50px;width:105.00px;height:1.00px;background:#dcdcdc;"></div>
<span class="t" style="left:584.00px;top:561.00px;font-size:12.50px;letter-spacing:0.000px;color:#000;transform:scaleX(0.8750);transform-origin:0 0;">R$</span>
<span class="t" style="left:640.20px;top:561.00px;font-size:12.90px;letter-spacing:-0.150px;color:#000;">200,00</span>
<div class="r" style="left:685.00px;top:549.50px;width:105.00px;height:33.50px;background:#ebebeb;"></div>
<span class="t" style="left:691.70px;top:561.00px;font-size:12.50px;letter-spacing:0.000px;color:#404040;transform:scaleX(0.8937);transform-origin:0 0;">R$</span>
<span class="t" style="left:728.40px;top:561.00px;font-size:12.90px;letter-spacing:-0.120px;color:#404040;">80.000,00</span>
<div class="r" style="left:793.00px;top:549.50px;width:105.00px;height:33.50px;background:#ebebeb;"></div>
<span class="t" style="left:799.70px;top:561.00px;font-size:12.50px;letter-spacing:0.000px;color:#404040;transform:scaleX(0.8937);transform-origin:0 0;">R$</span>
<span class="t" style="left:829.20px;top:561.00px;font-size:12.90px;letter-spacing:-0.100px;color:#404040;">100.000,00</span>
<div class="r" style="left:901.00px;top:549.50px;width:105.00px;height:33.50px;background:#ebebeb;"></div>
<span class="t" style="left:907.70px;top:561.00px;font-size:12.50px;letter-spacing:0.000px;color:#404040;transform:scaleX(0.8937);transform-origin:0 0;">R$</span>
<span class="t" style="left:937.20px;top:561.00px;font-size:12.90px;letter-spacing:-0.100px;color:#404040;">120.000,00</span>
<div class="r" style="left:1009.00px;top:549.50px;width:105.00px;height:33.50px;background:#ebebeb;"></div>
<span class="t" style="left:1015.70px;top:561.00px;font-size:12.50px;letter-spacing:0.000px;color:#404040;transform:scaleX(0.8937);transform-origin:0 0;">R$</span>
<span class="t" style="left:1045.20px;top:561.00px;font-size:12.90px;letter-spacing:-0.100px;color:#404040;">140.000,00</span>
<div class="r" style="left:1117.00px;top:549.50px;width:105.00px;height:33.50px;background:#ebebeb;"></div>
<span class="t" style="left:1123.70px;top:561.00px;font-size:12.50px;letter-spacing:0.000px;color:#404040;transform:scaleX(0.8937);transform-origin:0 0;">R$</span>
<span class="t" style="left:1153.20px;top:561.00px;font-size:12.90px;letter-spacing:-0.100px;color:#404040;">160.000,00</span>
<div class="r" style="left:1225.30px;top:549.50px;width:118.70px;height:33.50px;background:#ebebeb;"></div>
<span class="t" style="left:1232.00px;top:561.00px;font-size:12.50px;letter-spacing:0.000px;color:#404040;transform:scaleX(0.8937);transform-origin:0 0;">R$</span>
<span class="t" style="left:1273.40px;top:561.00px;font-size:12.90px;letter-spacing:-0.100px;color:#404040;">600.200,00</span>
<div class="r" style="left:226.00px;top:586.00px;width:349.00px;height:32.70px;background:#6699cc;"></div>
<span class="t" style="left:235.00px;top:597.00px;font-size:12.00px;letter-spacing:0.100px;color:#fff;font-weight:bold;">Serviços de funilaria e pintura</span>
<div class="r" style="left:577.00px;top:619.50px;width:105.00px;height:1.00px;background:#dcdcdc;"></div>
<span class="t" style="left:584.00px;top:597.00px;font-size:12.50px;letter-spacing:0.000px;color:#000;transform:scaleX(0.8750);transform-origin:0 0;">R$</span>
<span class="t" style="left:640.20px;top:597.00px;font-size:12.90px;letter-spacing:-0.150px;color:#000;">400,00</span>
<div class="r" style="left:685.00px;top:585.50px;width:105.00px;height:33.50px;background:#ebebeb;"></div>
<span class="t" style="left:691.70px;top:597.00px;font-size:12.50px;letter-spacing:0.000px;color:#404040;transform:scaleX(0.8937);transform-origin:0 0;">R$</span>
<span class="t" style="left:728.40px;top:597.00px;font-size:12.90px;letter-spacing:-0.120px;color:#404040;">80.000,00</span>
<div class="r" style="left:793.00px;top:585.50px;width:105.00px;height:33.50px;background:#ebebeb;"></div>
<span class="t" style="left:799.70px;top:597.00px;font-size:12.50px;letter-spacing:0.000px;color:#404040;transform:scaleX(0.8937);transform-origin:0 0;">R$</span>
<span class="t" style="left:829.20px;top:597.00px;font-size:12.90px;letter-spacing:-0.100px;color:#404040;">160.000,00</span>
<div class="r" style="left:901.00px;top:585.50px;width:105.00px;height:33.50px;background:#ebebeb;"></div>
<span class="t" style="left:907.70px;top:597.00px;font-size:12.50px;letter-spacing:0.000px;color:#404040;transform:scaleX(0.8937);transform-origin:0 0;">R$</span>
<span class="t" style="left:937.20px;top:597.00px;font-size:12.90px;letter-spacing:-0.100px;color:#404040;">240.000,00</span>
<div class="r" style="left:1009.00px;top:585.50px;width:105.00px;height:33.50px;background:#ebebeb;"></div>
<span class="t" style="left:1015.70px;top:597.00px;font-size:12.50px;letter-spacing:0.000px;color:#404040;transform:scaleX(0.8937);transform-origin:0 0;">R$</span>
<span class="t" style="left:1045.20px;top:597.00px;font-size:12.90px;letter-spacing:-0.100px;color:#404040;">320.000,00</span>
<div class="r" style="left:1117.00px;top:585.50px;width:105.00px;height:33.50px;background:#ebebeb;"></div>
<span class="t" style="left:1123.70px;top:597.00px;font-size:12.50px;letter-spacing:0.000px;color:#404040;transform:scaleX(0.8937);transform-origin:0 0;">R$</span>
<span class="t" style="left:1153.20px;top:597.00px;font-size:12.90px;letter-spacing:-0.100px;color:#404040;">400.000,00</span>
<div class="r" style="left:1225.30px;top:585.50px;width:118.70px;height:33.50px;background:#ebebeb;"></div>
<span class="t" style="left:1232.00px;top:597.00px;font-size:12.50px;letter-spacing:0.000px;color:#404040;transform:scaleX(0.8937);transform-origin:0 0;">R$</span>
<span class="t" style="left:1262.90px;top:597.00px;font-size:12.90px;letter-spacing:-0.106px;color:#404040;">1.200.400,00</span>
<div class="r" style="left:226.00px;top:622.00px;width:348.00px;height:34.80px;background:#6699cc;"></div>
<span class="t" style="left:235.00px;top:633.00px;font-size:12.00px;letter-spacing:0.146px;color:#fff;font-weight:bold;">Resumo da projeção de receitas operacionais</span>
<div class="r" style="left:577.00px;top:622.00px;width:105.00px;height:34.80px;background:#6699cc;"></div>
<span class="t" style="left:583.50px;top:633.00px;font-size:12.50px;letter-spacing:0.000px;color:#fff;transform:scaleX(0.9062);transform-origin:0 0;font-weight:bold;">R$</span>
<span class="t" style="left:629.40px;top:633.00px;font-size:12.90px;letter-spacing:-0.146px;color:#fff;font-weight:bold;">1.950,00</span>
<div class="r" style="left:685.00px;top:622.00px;width:105.00px;height:34.80px;background:#6699cc;"></div>
<span class="t" style="left:691.50px;top:633.00px;font-size:12.50px;letter-spacing:0.000px;color:#fff;transform:scaleX(0.9062);transform-origin:0 0;font-weight:bold;">R$</span>
<span class="t" style="left:712.50px;top:633.00px;font-size:12.90px;letter-spacing:-0.106px;color:#fff;font-weight:bold;">1.039.000,00</span>
<div class="r" style="left:793.00px;top:622.00px;width:105.00px;height:34.80px;background:#6699cc;"></div>
<span class="t" style="left:799.50px;top:633.00px;font-size:12.50px;letter-spacing:0.000px;color:#fff;transform:scaleX(0.9062);transform-origin:0 0;font-weight:bold;">R$</span>
<span class="t" style="left:820.50px;top:633.00px;font-size:12.90px;letter-spacing:-0.106px;color:#fff;font-weight:bold;">1.852.000,00</span>
<div class="r" style="left:901.00px;top:622.00px;width:105.00px;height:34.80px;background:#6699cc;"></div>
<span class="t" style="left:907.50px;top:633.00px;font-size:12.50px;letter-spacing:0.000px;color:#fff;transform:scaleX(0.9062);transform-origin:0 0;font-weight:bold;">R$</span>
<span class="t" style="left:928.50px;top:633.00px;font-size:12.90px;letter-spacing:-0.106px;color:#fff;font-weight:bold;">2.665.000,00</span>
<div class="r" style="left:1009.00px;top:622.00px;width:105.00px;height:34.80px;background:#6699cc;"></div>
<span class="t" style="left:1015.50px;top:633.00px;font-size:12.50px;letter-spacing:0.000px;color:#fff;transform:scaleX(0.9062);transform-origin:0 0;font-weight:bold;">R$</span>
<span class="t" style="left:1036.50px;top:633.00px;font-size:12.90px;letter-spacing:-0.106px;color:#fff;font-weight:bold;">2.920.000,00</span>
<div class="r" style="left:1117.00px;top:622.00px;width:105.00px;height:34.80px;background:#6699cc;"></div>
<span class="t" style="left:1123.50px;top:633.00px;font-size:12.50px;letter-spacing:0.000px;color:#fff;transform:scaleX(0.9062);transform-origin:0 0;font-weight:bold;">R$</span>
<span class="t" style="left:1144.50px;top:633.00px;font-size:12.90px;letter-spacing:-0.106px;color:#fff;font-weight:bold;">2.645.000,00</span>
<div class="r" style="left:1225.30px;top:622.00px;width:118.70px;height:34.80px;background:#6699cc;"></div>
<span class="t" style="left:1231.80px;top:633.00px;font-size:12.50px;letter-spacing:0.000px;color:#fff;transform:scaleX(0.9062);transform-origin:0 0;font-weight:bold;">R$</span>
<span class="t" style="left:1257.70px;top:633.00px;font-size:12.90px;letter-spacing:-0.040px;color:#fff;font-weight:bold;">11.122.950,00</span>
<div class="r" style="left:226.00px;top:694.00px;width:456.00px;height:23.00px;background:#336699;"></div>
<div class="r" style="left:685.00px;top:694.00px;width:105.00px;height:23.00px;background:#336699;"></div>
<div class="r" style="left:793.00px;top:694.00px;width:105.00px;height:23.00px;background:#336699;"></div>
<div class="r" style="left:901.00px;top:694.00px;width:105.00px;height:23.00px;background:#336699;"></div>
<div class="r" style="left:1009.00px;top:694.00px;width:105.00px;height:23.00px;background:#336699;"></div>
<div class="r" style="left:1117.00px;top:694.00px;width:105.00px;height:23.00px;background:#336699;"></div>
<div class="r" style="left:1225.30px;top:694.00px;width:118.70px;height:23.00px;background:#336699;"></div>
<div class="r" style="left:200px;top:694px;width:1145px;height:23px;overflow:hidden">
<span class="t" style="left:35.00px;top:11.00px;font-size:12.00px;letter-spacing:0.080px;color:#fff;font-weight:bold;">Outras receitas</span>
<span class="t" style="left:498.25px;top:11.00px;font-size:12.00px;letter-spacing:0.094px;color:#fff;font-weight:bold;">Receita ano 1</span>
<span class="t" style="left:606.25px;top:11.00px;font-size:12.00px;letter-spacing:0.094px;color:#fff;font-weight:bold;">Receita ano 2</span>
<span class="t" style="left:714.25px;top:11.00px;font-size:12.00px;letter-spacing:0.094px;color:#fff;font-weight:bold;">Receita ano 3</span>
<span class="t" style="left:822.25px;top:11.00px;font-size:12.00px;letter-spacing:0.094px;color:#fff;font-weight:bold;">Receita ano 4</span>
<span class="t" style="left:930.25px;top:11.00px;font-size:12.00px;letter-spacing:0.094px;color:#fff;font-weight:bold;">Receita ano 5</span>
<span class="t" style="left:1068.75px;top:11.00px;font-size:12.00px;letter-spacing:0.438px;color:#fff;font-weight:bold;">Total</span>
</div>
<div class="r" style="left:1345.00px;top:188.00px;width:20.00px;height:529.00px;background:#fff;"></div>
<div class="r" style="left:1348.00px;top:206.00px;width:15.00px;height:497.00px;background:#f0f0f0;"></div>
<div class="r" style="left:1348.00px;top:191.00px;width:15.00px;height:15.00px;background:#fff;border:1px solid #ababab;"></div>
<svg class="r" style="left:1351.00px;top:196.00px" width="9" height="6" viewBox="0 0 9 6"><path d="M0 5.5 L4.5 0.5 L9 5.5Z" fill="#777"/></svg>
<div class="r" style="left:1348.00px;top:206.00px;width:15.00px;height:69.00px;background:#fff;border:1px solid #ababab;"></div>
<div class="r" style="left:1348.00px;top:703.00px;width:15.00px;height:14.50px;background:#fff;border:1px solid #ababab;"></div>
<svg class="r" style="left:1351.00px;top:708.00px" width="9" height="6" viewBox="0 0 9 6"><path d="M0 0.5 L4.5 5.5 L9 0.5Z" fill="#777"/></svg>
<div class="r" style="left:0.00px;top:717.00px;width:1365.00px;height:28.00px;background:#f4f4f4;"></div>
<div class="r" style="left:0.00px;top:716.50px;width:1345.00px;height:1.00px;background:#ababab;"></div>
<div class="r" style="left:45.00px;top:724.00px;width:1285.00px;height:15.00px;background:#e8e8e8;"></div>
<div class="r" style="left:30.00px;top:724.00px;width:16.00px;height:15.00px;background:#fff;border:1px solid #ababab;"></div>
<svg class="r" style="left:35.00px;top:728.00px" width="5" height="8" viewBox="0 0 5 8"><path d="M4.2 0 L0 3.6 L4.2 7.2Z" fill="#777"/></svg>
<div class="r" style="left:45.00px;top:724.00px;width:1168.00px;height:15.00px;background:#fff;border:1px solid #ababab;"></div>
<div class="r" style="left:1330.00px;top:724.00px;width:15.00px;height:15.00px;background:#fff;border:1px solid #ababab;"></div>
<svg class="r" style="left:1336.00px;top:728.00px" width="5" height="8" viewBox="0 0 5 8"><path d="M0 0 L4.2 3.6 L0 7.2Z" fill="#777"/></svg>
<div class="r" style="left:13.00px;top:726.00px;width:2.00px;height:2.00px;background:#a8a8a8;"></div>
<div class="r" style="left:13.00px;top:730.00px;width:2.00px;height:2.00px;background:#a8a8a8;"></div>
<div class="r" style="left:13.00px;top:734.00px;width:2.00px;height:2.00px;background:#a8a8a8;"></div>
<div class="r" style="left:0.00px;top:745.00px;width:1365.00px;height:21.00px;background:#217346;"></div>
<div class="r" style="left:1080.00px;top:745.00px;width:38.00px;height:21.00px;background:#185c37;"></div>
<span class="t" style="left:7.70px;top:752.00px;font-size:10.00px;letter-spacing:0.035px;color:#fff;">PRONTO</span>
<span class="t" style="left:1336.40px;top:752.00px;font-size:10.10px;letter-spacing:0.050px;color:#fff;">90%</span>
<div class="r" style="left:1209.00px;top:755.50px;width:100.00px;height:1.20px;background:#fff;"></div>
<div class="r" style="left:1252.00px;top:750.00px;width:4.30px;height:11.20px;background:#fff;"></div>
<div class="r" style="left:1258.60px;top:752.80px;width:1.20px;height:6.70px;background:#fff;"></div>
<div class="r" style="left:1199.00px;top:755.20px;width:6.20px;height:1.80px;background:#fff;"></div>
<div class="r" style="left:1313.50px;top:755.20px;width:7.80px;height:1.80px;background:#fff;"></div>
<div class="r" style="left:1316.50px;top:752.20px;width:1.80px;height:7.80px;background:#fff;"></div>
<div class="r" style="left:0.00px;top:766.00px;width:1365.00px;height:2.00px;background:#8a6f64;"></div>
<div class="r" style="left:52.00px;top:766.50px;width:58.00px;height:1.50px;background:#c9bdb6;"></div>
<div class="r" style="left:114.00px;top:766.50px;width:58.00px;height:1.50px;background:#c9bdb6;"></div>
<div class="r" style="left:176.00px;top:766.50px;width:58.00px;height:1.50px;background:#c9bdb6;"></div>
<div class="r" style="left:238.00px;top:766.50px;width:60.00px;height:1.50px;background:#c9bdb6;"></div>
<div class="r" style="left:300.00px;top:766.50px;width:58.00px;height:1.50px;background:#c9bdb6;"></div>
<div class="r" style="left:176.00px;top:766.50px;width:58.00px;height:1.50px;background:#ece6e2;"></div>
<svg class="r" style="left:10.00px;top:2.00px" width="17" height="17" viewBox="0 0 17 17"><path d="M8 2.2 H15.6 V14.8 H8Z" fill="#fff" stroke="#2a7a4d" stroke-width="0.9"/>
<g stroke="#2a7a4d" stroke-width="0.9"><path d="M8 4.8H15.6M8 7.3H15.6M8 9.8H15.6M8 12.3H15.6M12.4 2.2V14.8"/></g>
<path d="M0 2.4 L9.6 0.6 V16.4 L0 14.6Z" fill="#1e6e42"/>
<path d="M2.4 5.2 L4.1 5.1 L5.0 7.3 L6.0 5.0 L7.7 4.9 L5.9 8.5 L7.8 12.2 L6.0 12.1 L4.95 9.7 L3.9 11.95 L2.3 11.85 L4.05 8.5Z" fill="#fff"/></svg>
<svg class="r" style="left:40.00px;top:4.00px" width="14" height="14" viewBox="0 0 14 14"><path d="M0.3 0.3 H13.7 V13.7 H0.3Z" fill="#8e45ad"/><rect x="2.6" y="1.2" width="8.8" height="5.2" fill="#fff"/><rect x="3.6" y="9" width="6.8" height="4.7" fill="#fff"/><rect x="5" y="10.2" width="2.4" height="3.5" fill="#8e45ad"/></svg>
<svg class="r" style="left:68.00px;top:3.00px" width="17" height="15" viewBox="0 0 17 15"><path d="M2.4 5.6 H9.6 A3.9 3.9 0 0 1 9.6 13.4 H7.6" fill="none" stroke="#3f7cc6" stroke-width="2.1"/><path d="M6.6 1.2 L2.2 5.6 L6.6 10" fill="none" stroke="#3f7cc6" stroke-width="2.1"/></svg>
<svg class="r" style="left:89.00px;top:9.00px" width="6" height="4" viewBox="0 0 6 4"><path d="M0 0 H5.4 L2.7 3Z" fill="#666"/></svg>
<svg class="r" style="left:107.00px;top:3.00px" width="17" height="15" viewBox="0 0 17 15"><path d="M14.6 5.6 H7.4 A3.9 3.9 0 0 0 7.4 13.4 H9.4" fill="none" stroke="#b5b5b5" stroke-width="2.1"/><path d="M10.4 1.2 L14.8 5.6 L10.4 10" fill="none" stroke="#b5b5b5" stroke-width="2.1"/></svg>
<svg class="r" style="left:128.50px;top:9.00px" width="6" height="4" viewBox="0 0 6 4"><path d="M0 0 H5.4 L2.7 3Z" fill="#c8c8c8"/></svg>
<svg class="r" style="left:149.00px;top:3.00px" width="16" height="17" viewBox="0 0 16 17"><path d="M1.2 1 H9 L12.6 4.6 V8 M8 16 H1.2 V1" fill="none" stroke="#5a5a5a" stroke-width="1.1"/><path d="M9 1 V4.6 H12.6" fill="none" stroke="#5a5a5a" stroke-width="0.9"/>
<circle cx="7.3" cy="9.6" r="3.4" fill="#fff" stroke="#5a5a5a" stroke-width="1.3"/><path d="M9.8 12.1 L14 16" stroke="#5a5a5a" stroke-width="2" stroke-linecap="round"/></svg>
<svg class="r" style="left:176.50px;top:8.50px" width="7" height="7" viewBox="0 0 7 7"><rect x="0.3" y="0.3" width="5.6" height="1.2" fill="#666"/><path d="M0.3 3.2 H5.9 L3.1 6.3Z" fill="#666"/></svg>
<span class="t" style="left:1231.00px;top:6.00px;font-size:12.50px;letter-spacing:-0.825px;color:#555;font-weight:bold;">?</span>
<svg class="r" style="left:1257.00px;top:5.50px" width="14" height="11" viewBox="0 0 14 11"><rect x="0.5" y="0.5" width="12.6" height="9.4" fill="none" stroke="#666" stroke-width="1"/><path d="M0.5 2.6H13.1" stroke="#666"/><path d="M6.8 8.6V4.6M4.8 6.4L6.8 4.4L8.8 6.4" fill="none" stroke="#666" stroke-width="1.1"/></svg>
<div class="r" style="left:1288.00px;top:12.20px;width:9.00px;height:2.00px;background:#666;"></div>
<svg class="r" style="left:1317.00px;top:6.00px" width="11" height="11" viewBox="0 0 11 11"><path d="M2.8 2.8V0.7H9.9V6.9H7.6" fill="none" stroke="#666" stroke-width="1.3"/><rect x="0.7" y="3.5" width="6.8" height="5.8" fill="none" stroke="#666" stroke-width="1.3"/></svg>
<svg class="r" style="left:1346.00px;top:6.00px" width="11" height="11" viewBox="0 0 11 11"><path d="M1 1L9.6 9.6M9.6 1L1 9.6" stroke="#555" stroke-width="2.1"/></svg>
<svg class="r" style="left:1320.00px;top:35.00px" width="8" height="4" viewBox="0 0 8 4"><path d="M0 0H6.6L3.3 3.4Z" fill="#777"/></svg>
<div class="r" style="left:1332.00px;top:25.00px;width:24.00px;height:23.00px;background:#fff;"></div>
<svg class="r" style="left:1336.00px;top:27.00px" width="17" height="21" viewBox="0 0 17 21"><g fill="none" stroke="#333" stroke-width="1.2" stroke-linecap="round"><path d="M2 5.5V11A5 5 0 0 0 7 16H9.6A5 5 0 0 0 14.6 11V5.5"/><path d="M2.8 3.2A3.6 3.6 0 0 1 5.6 1.6H11A3.6 3.6 0 0 1 13.8 3.2" stroke-width="0.9"/></g><path d="M5.6 17.2H11V18H5.6ZM6.3 18.7H10.3L8.3 20.3Z" fill="#333"/></svg>
<span class="t" style="left:20.50px;top:57.00px;font-size:11.90px;letter-spacing:0.137px;color:#5a5a5a;-webkit-text-stroke:0.35px #5a5a5a;">ABC</span>
<svg class="r" style="left:20.00px;top:66.00px" width="25" height="23" viewBox="0 0 25 23"><path d="M1 11.8 L3.5 9.3 L9.5 15.5 L20.4 1.6 L23 4 L9.5 21.9Z" fill="#3f7cc6"/></svg>
<svg class="r" style="left:75.00px;top:57.00px" width="32" height="30" viewBox="0 0 32 30"><path d="M1.2 8.4 L8 1.6 H15.4 L8.8 8.4Z" fill="#fff" stroke="#8a8a8a" stroke-width="0.9"/>
<path d="M1.2 8.4 H8.8 V27.6 Q5 29.4 1.2 27.6Z" fill="#8c8c8c"/>
<path d="M1.6 12.2H8.4M1.6 24.6H8.4" stroke="#fff" stroke-width="0.9"/>
<path d="M9.8 8 L16.4 1.2 H24.6 V26.5 L18 28.8 H9.8Z" fill="#ebc574"/>
<path d="M16.4 1.4 Q14 6 18.2 9.6 M16.8 8 L23.8 1.6" stroke="#fff" stroke-width="0.8" fill="none" opacity="0.8"/>
<circle cx="19.8" cy="16.5" r="6" fill="#fff" fill-opacity="0.55" stroke="#757575" stroke-width="1.5"/>
<path d="M18.2 12.6 V20.4" stroke="#ebc574" stroke-width="2.2"/>
<path d="M24.2 21 L29.8 26.8" stroke="#757575" stroke-width="2.1" stroke-linecap="round"/></svg>
<svg class="r" style="left:138.00px;top:58.00px" width="33" height="28" viewBox="0 0 33 28"><path d="M1 2.8 H32 V27 H1Z" fill="#3d79c2"/>
<path d="M3.3 1.2 Q10 0.4 16.4 2.6 Q23 0.4 29.8 1.2 V25 Q23 24.2 16.4 26.6 Q10 24.2 3.3 25Z" fill="#fff" stroke="#7d7d7d" stroke-width="0.9"/>
<path d="M16.4 2.6V26.6" stroke="#7d7d7d" stroke-width="0.9"/>
<g stroke-width="0.9"><path d="M6 5.4H13.8" stroke="#bbb"/><path d="M6 5.4H11.8" stroke="#d9482b"/>
<path d="M6 8.4H13.8M6 11.4H13.8M6 14.4H13.8" stroke="#bbb"/><path d="M8 8.4H12.8M8 11.4H11.8M8 14.4H11" stroke="#3d79c2"/>
<path d="M6 17.4H13.8M6 20.4H13.8" stroke="#999"/>
<path d="M19.2 5.4H27M19.2 8.4H27M19.2 11.4H27M19.2 14.4H27M19.2 17.4H27M19.2 20.4H27" stroke="#999"/></g></svg>
<svg class="r" style="left:213.00px;top:58.00px" width="31" height="31" viewBox="0 0 31 31"><path d="M17 26.5 H1.6 V1.6 H14.6 L20.4 7.4 V9.6" fill="none" stroke="#666" stroke-width="1.1"/>
<path d="M14.6 1.6 V7.4 H20.4" fill="none" stroke="#666" stroke-width="0.9"/>
<path d="M4 4.5H12M4 7.5H12M4 10.5H13.8" stroke="#e8873a" stroke-width="1"/>
<rect x="9" y="15.6" width="8" height="9" fill="#fff"/>
<path d="M15 12.8 Q19.2 8.6 21.6 14.8 M19 12.8 L21.7 15.6 L24.4 12.8" fill="none" stroke="#3f7cc6" stroke-width="1.2"/>
<g fill="none" stroke="#555" stroke-width="1.25" stroke-linecap="round">
<path d="M17.8 20.8 L28.2 19.8"/>
<path d="M21.6 17.4 C21 21 21.2 25 22.6 28.6"/>
<path d="M26 21.8 C25.6 25.4 22.4 28.6 19.4 28.8 C17.4 28.9 17 26.6 18.4 25.2 C20.4 23.2 25.4 22.6 27.6 24.2 C29.6 25.8 29 28 26.4 29.2"/></g></svg>
<span class="t" style="left:222.90px;top:71.00px;font-size:13.20px;letter-spacing:0.000px;color:#555;">a</span>
<svg class="r" style="left:279.00px;top:62.00px" width="28" height="21" viewBox="0 0 28 21"><path d="M0.6 0.6H27.4V13.6L20.6 20.4H0.6Z" fill="#fff"/><path d="M11 0.6 H27.4 V13.6 L20.6 20.4 H0.6 V7" fill="none" stroke="#707070" stroke-width="1"/><path d="M20.6 20.4V13.6H27.4Z" fill="#f7f7f7" stroke="#707070" stroke-width="0.8"/></svg>
<svg class="r" style="left:276.50px;top:55.50px" width="14" height="14" viewBox="0 0 14 14"><g stroke="#e8bb6c" stroke-width="1.8"><path d="M7 0.8V13.2M0.8 7H13.2M2.6 2.6L11.4 11.4M11.4 2.6L2.6 11.4"/></g><circle cx="7" cy="7" r="2.2" fill="#fff"/></svg>
<svg class="r" style="left:334.00px;top:62.00px" width="28" height="21" viewBox="0 0 28 21"><path d="M0.6 0.6H27.4V13.6L20.6 20.4H0.6Z" fill="#f6f1f8"/><path d="M13 0.6 H27.4 V13.6 L20.6 20.4 H0.6 V7" fill="none" stroke="#cfcfcf" stroke-width="1"/><path d="M20.6 20.4V13.6H27.4Z" fill="#f7f7f7" stroke="#cfcfcf" stroke-width="0.8"/></svg>
<svg class="r" style="left:332.00px;top:56.00px" width="17" height="15" viewBox="0 0 17 15"><path d="M1.6 1.6 Q7 5.6 14.2 13 M14.8 1.6 Q7 5.4 1.2 13" fill="none" stroke="#b3b3b3" stroke-width="2.2" stroke-linecap="round"/></svg>
<svg class="r" style="left:379.00px;top:62.00px" width="28" height="21" viewBox="0 0 28 21"><path d="M0.6 0.6H27.4V13.6L20.6 20.4H0.6Z" fill="#fff"/><path d="M14 0.6 H27.4 V13.6 L20.6 20.4 H0.6 V7" fill="none" stroke="#707070" stroke-width="1"/><path d="M20.6 20.4V13.6H27.4Z" fill="#f7f7f7" stroke="#707070" stroke-width="0.8"/></svg>
<svg class="r" style="left:377.00px;top:56.00px" width="17" height="13" viewBox="0 0 17 13"><path d="M15.8 6.4 H3.6 M8.4 0.9 L2.6 6.4 L8.4 11.9" fill="none" stroke="#3f7cc6" stroke-width="3"/></svg>
<svg class="r" style="left:427.00px;top:62.00px" width="28" height="21" viewBox="0 0 28 21"><path d="M0.6 0.6H27.4V13.6L20.6 20.4H0.6Z" fill="#fff"/><path d="M14 0.6 H27.4 V13.6 L20.6 20.4 H0.6 V7" fill="none" stroke="#707070" stroke-width="1"/><path d="M20.6 20.4V13.6H27.4Z" fill="#f7f7f7" stroke="#707070" stroke-width="0.8"/></svg>
<svg class="r" style="left:424.50px;top:56.00px" width="17" height="13" viewBox="0 0 17 13"><path d="M0.6 6.4 H12.8 M8.2 0.9 L14 6.4 L8.2 11.9" fill="none" stroke="#3f7cc6" stroke-width="3"/></svg>
<svg class="r" style="left:469.00px;top:58.00px" width="16" height="13" viewBox="0 0 16 13"><path d="M0.6 0.6H14.8V7.4L10.6 11.6H0.6Z" fill="#f6f1f8" stroke="#b9b9b9" stroke-width="1" stroke-dasharray="1.6 1.2"/><path d="M0.8 11.4L14.6 0.8" stroke="#b9b9b9" stroke-width="1"/></svg>
<svg class="r" style="left:469.00px;top:80.00px" width="17" height="15" viewBox="0 0 17 15"><g fill="none" stroke="#555" stroke-width="1"><path d="M0.6 8.6V0.6H13.4"/><path d="M2.6 10.6V2.6H15.4"/><path d="M4.6 4.6H16.2V10L12.6 13.6H4.6Z" fill="#fff"/><path d="M12.6 13.6V10H16.2"/></g></svg>
<svg class="r" style="left:469.00px;top:103.00px" width="17" height="14" viewBox="0 0 17 14"><path d="M0.6 12.8V0.6H13.8Z" fill="#fff"/><path d="M0.6 12.8V0.6H13.8" fill="none" stroke="#666" stroke-width="1" stroke-dasharray="1 1.3"/><path d="M0.4 13.2L14.2 0.4" stroke="#777" stroke-width="1"/><path d="M10.4 4.2 Q15.8 4 15.4 8.6 Q14.4 12.8 9.6 12.6 Q6 12.2 4.4 10.6" fill="none" stroke="#e0672a" stroke-width="1.1"/></svg>
<svg class="r" style="left:678.00px;top:58.00px" width="34" height="30" viewBox="0 0 34 30"><g transform="translate(0,0)"><path d="M0.5 0.5H27.5V21.5H0.5Z" fill="#fff"/><g stroke="#c4c4c4" stroke-width="1"><path d="M7.5 1V21M15.5 1V21M23.5 1V21M1 5.5H27M1 10.5H27M1 15.5H27"/></g><path d="M0.5 0.5H27.5V21.5H10.5L9 24.5H2Q0.5 24.5 0.5 23Z" fill="none" stroke="#6e6e6e" stroke-width="1"/><path d="M0.5 21.5H10.5" stroke="#6e6e6e" stroke-width="1"/></g></svg>
<div class="r" style="left:694.00px;top:76.00px;width:15.00px;height:13.00px;background:#fff;"></div>
<svg class="r" style="left:695.00px;top:71.40px" width="14" height="17" viewBox="0 0 14 17"><path d="M3.2 7V5.4A3.7 3.7 0 0 1 10.6 5.4V7" fill="none" stroke="#e8bb6c" stroke-width="2"/><rect x="0.3" y="6.2" width="13.2" height="10.4" rx="1" fill="#e8bb6c"/><circle cx="6.9" cy="10.4" r="1.3" fill="#fff"/><rect x="6.3" y="10.8" width="1.2" height="3.2" fill="#fff"/></svg>
<svg class="r" style="left:741.00px;top:58.00px" width="34" height="30" viewBox="0 0 34 30"><path d="M0.5 25V0.5H28.5" fill="none" stroke="#6e6e6e" stroke-width="1"/><g transform="translate(4,2)"><path d="M0.5 0.5H27.5V21.5H0.5Z" fill="#fff"/><g stroke="#c4c4c4" stroke-width="1"><path d="M7.5 1V21M15.5 1V21M23.5 1V21M1 5.5H27M1 10.5H27M1 15.5H27"/></g><path d="M0.5 0.5H27.5V21.5H10.5L9 24.5H2Q0.5 24.5 0.5 23Z" fill="none" stroke="#6e6e6e" stroke-width="1"/><path d="M0.5 21.5H10.5" stroke="#6e6e6e" stroke-width="1"/></g></svg>
<div class="r" style="left:758.60px;top:76.00px;width:15.40px;height:13.00px;background:#fff;"></div>
<svg class="r" style="left:759.60px;top:71.40px" width="14" height="17" viewBox="0 0 14 17"><path d="M3.2 7V5.4A3.7 3.7 0 0 1 10.6 5.4V7" fill="none" stroke="#e8bb6c" stroke-width="2"/><rect x="0.3" y="6.2" width="13.2" height="10.4" rx="1" fill="#e8bb6c"/><circle cx="6.9" cy="10.4" r="1.3" fill="#fff"/><rect x="6.3" y="10.8" width="1.2" height="3.2" fill="#fff"/></svg>
<svg class="r" style="left:831.00px;top:58.00px" width="34" height="30" viewBox="0 0 34 30"><path d="M0.5 25V0.5H28.5" fill="none" stroke="#6e6e6e" stroke-width="1"/><g transform="translate(3,2)"><path d="M0.5 0.5H27.5V21.5H0.5Z" fill="#fff"/><g stroke="#c4c4c4" stroke-width="1"><path d="M7.5 1V21M15.5 1V21M23.5 1V21M1 5.5H27M1 10.5H27M1 15.5H27"/></g><path d="M0.5 0.5H27.5V21.5H10.5L9 24.5H2Q0.5 24.5 0.5 23Z" fill="none" stroke="#6e6e6e" stroke-width="1"/><path d="M0.5 21.5H10.5" stroke="#6e6e6e" stroke-width="1"/></g></svg>
<div class="r" style="left:840.50px;top:78.00px;width:23.50px;height:11.00px;background:#fff;"></div>
<svg class="r" style="left:841.50px;top:78.60px" width="22" height="10" viewBox="0 0 22 10"><path d="M0.4 5 L5.6 0.4 L7.4 2.2 L5.4 3.9 H16.6 L14.6 2.2 L16.4 0.4 L21.6 5 L16.4 9.6 L14.6 7.8 L16.6 6.1 H5.4 L7.4 7.8 L5.6 9.6Z" fill="#3f7cc6"/></svg>
<svg class="r" style="left:899.00px;top:55.00px" width="19" height="18" viewBox="0 0 19 18"><path d="M8 3.4H17V11H8Z" fill="#fff" stroke="#666" stroke-width="0.9"/><path d="M8 6H17M8 8.6H17M12.5 3.4V11" stroke="#999" stroke-width="0.8"/>
<path d="M3.6 10V13H6" fill="none" stroke="#555" stroke-width="1"/>
<path d="M2.6 3.6V2.8A1.8 1.8 0 0 1 6.2 2.8V3.6" fill="none" stroke="#e8bb6c" stroke-width="1.3"/><rect x="1" y="3.4" width="6.8" height="5.6" fill="#e8bb6c"/><rect x="4" y="5" width="0.9" height="2.4" fill="#fff"/>
<path d="M6.8 14.2 L9.8 11.6 L10.8 12.7 L9.9 13.5 H14.3 L13.4 12.7 L14.4 11.6 L17.4 14.2 L14.4 16.8 L13.4 15.7 L14.3 14.9 H9.9 L10.8 15.7 L9.8 16.8Z" fill="#3f7cc6"/></svg>
<svg class="r" style="left:901.00px;top:80.00px" width="15" height="11" viewBox="0 0 15 11"><path d="M0.5 0.5H13.7V9.3H0.5Z" fill="#fff" stroke="#555" stroke-width="1"/><path d="M0.5 3.4H13.7M0.5 6.4H13.7M4.8 0.5V9.3M9.2 0.5V9.3" stroke="#777" stroke-width="0.8"/></svg>
<div class="r" style="left:906.50px;top:86.50px;width:9.50px;height:8.50px;background:#cfecdb;"></div>
<svg class="r" style="left:905.20px;top:83.60px" width="12" height="12" viewBox="0 0 12 12"><path d="M8.4 0.8 L11.2 3.6 L4.2 10.6 L0.6 11.6 L1.4 7.8Z" fill="#3f7cc6"/><path d="M7.2 2.2L9.8 4.8" stroke="#fff" stroke-width="0.7"/></svg>
<svg class="r" style="left:901.60px;top:103.00px" width="13" height="15" viewBox="0 0 13 15"><path d="M0.6 0.6H7.6L11 4V13.6H0.6Z" fill="#fff" stroke="#555" stroke-width="1"/><path d="M7.6 0.6V4H11" fill="none" stroke="#555" stroke-width="0.8"/><path d="M2.4 3.6H5M2.4 6.6H5M2.4 9.6H5" stroke="#e0462a" stroke-width="1"/><path d="M6 6.6H8M6 9.6H8" stroke="#bbb" stroke-width="0.8"/></svg>
<div class="r" style="left:907.00px;top:111.00px;width:9.00px;height:7.50px;background:#fff;"></div>
<svg class="r" style="left:905.20px;top:106.60px" width="12" height="12" viewBox="0 0 12 12"><path d="M8.4 0.8 L11.2 3.6 L4.2 10.6 L0.6 11.6 L1.4 7.8Z" fill="#3f7cc6"/><path d="M7.2 2.2L9.8 4.8" stroke="#fff" stroke-width="0.7"/></svg>
<svg class="r" style="left:1030.00px;top:108.20px" width="6" height="4" viewBox="0 0 6 4"><path d="M0 0H5L2.5 2.8Z" fill="#666"/></svg>
<svg class="r" style="left:1346.50px;top:131.00px" width="10" height="7" viewBox="0 0 10 7"><path d="M0.8 5.8L4.8 1.6L8.8 5.8" fill="none" stroke="#555" stroke-width="1.6"/></svg>
<svg class="r" style="left:92.50px;top:163.00px" width="8" height="5" viewBox="0 0 8 5"><path d="M0 0H7.4L3.7 4.2Z" fill="#777"/></svg>
<div class="r" style="left:121.00px;top:161.40px;width:1.60px;height:1.60px;background:#b0b0b0;"></div>
<div class="r" style="left:121.00px;top:165.20px;width:1.60px;height:1.60px;background:#b0b0b0;"></div>
<div class="r" style="left:121.00px;top:169.00px;width:1.60px;height:1.60px;background:#b0b0b0;"></div>
<svg class="r" style="left:146.00px;top:157.00px" width="20" height="18" viewBox="0 0 20 18"><path d="M1.6 1.8 Q9 6.6 17.6 16.6 M17.4 2.4 Q8 8.4 1.6 16.4" fill="none" stroke="#c9c9c9" stroke-width="2.2" stroke-linecap="round"/></svg>
<svg class="r" style="left:182.00px;top:157.00px" width="21" height="19" viewBox="0 0 21 19"><path d="M1.4 9.6 Q5 11.4 7.6 16.8 Q11.4 8 19.2 1.6" fill="none" stroke="#c9c9c9" stroke-width="2.8" stroke-linecap="round" stroke-linejoin="round"/></svg>
<span class="t" style="left:218.20px;top:154.00px;font-size:22.00px;letter-spacing:0.000px;color:#5c5c5c;font-weight:bold;font-style:italic;font-family:'Liberation Serif',serif;">f</span>
<span class="t" style="left:227.45px;top:157.00px;font-size:19.00px;letter-spacing:0.000px;color:#5c5c5c;font-weight:bold;font-style:italic;font-family:'Liberation Serif',serif;">x</span>
<svg class="r" style="left:1346.50px;top:164.00px" width="12" height="8" viewBox="0 0 12 8"><path d="M1.4 1.6L6 6L10.6 1.6" fill="none" stroke="#5e5e5e" stroke-width="3"/></svg>
<svg class="r" style="left:70.50px;top:748.50px" width="14" height="14" viewBox="0 0 14 14"><rect x="2" y="2.2" width="11.2" height="11" fill="none" stroke="#fff" stroke-width="1.2"/><rect x="7.4" y="2.2" width="5.8" height="2.2" fill="#fff"/><g fill="#fff"><rect x="4" y="6.6" width="2" height="1.1"/><rect x="6.9" y="6.6" width="2" height="1.1"/><rect x="9.8" y="6.6" width="2" height="1.1"/><rect x="4" y="8.7" width="2" height="1.1"/><rect x="6.9" y="8.7" width="2" height="1.1"/><rect x="9.8" y="8.7" width="2" height="1.1"/><rect x="4" y="10.8" width="2" height="1.1"/><rect x="6.9" y="10.8" width="2" height="1.1"/><rect x="9.8" y="10.8" width="2" height="1.1"/></g><circle cx="3.8" cy="3.8" r="3.5" fill="#e2eee8"/></svg>
<svg class="r" style="left:1092.00px;top:749.00px" width="14" height="14" viewBox="0 0 14 14"><path d="M0.6 0.6H12.6V12.6H0.6ZM4.6 0.6V12.6M8.6 0.6V12.6M0.6 4.6H12.6M0.6 8.6H12.6" fill="none" stroke="#fff" stroke-width="1.1"/></svg>
<svg class="r" style="left:1130.00px;top:749.00px" width="15" height="14" viewBox="0 0 15 14"><path d="M0.6 0.6H13.6V12.6H0.6Z" fill="none" stroke="#fff" stroke-width="1.1"/><path d="M3.4 3.4H10.8V9.8H3.4ZM5 5.4H9.2M5 7.6H9.2" fill="none" stroke="#fff" stroke-width="1"/></svg>
<svg class="r" style="left:1168.00px;top:749.00px" width="15" height="14" viewBox="0 0 15 14"><path d="M0.6 0.6H13.6V12.6H0.6Z" fill="none" stroke="#fff" stroke-width="1.1"/><path d="M0.6 0.6H4.4V6.4H0.6ZM6.4 0.6H9.6V6.4H6.4Z" fill="#fff"/></svg>
</div></body></html>
